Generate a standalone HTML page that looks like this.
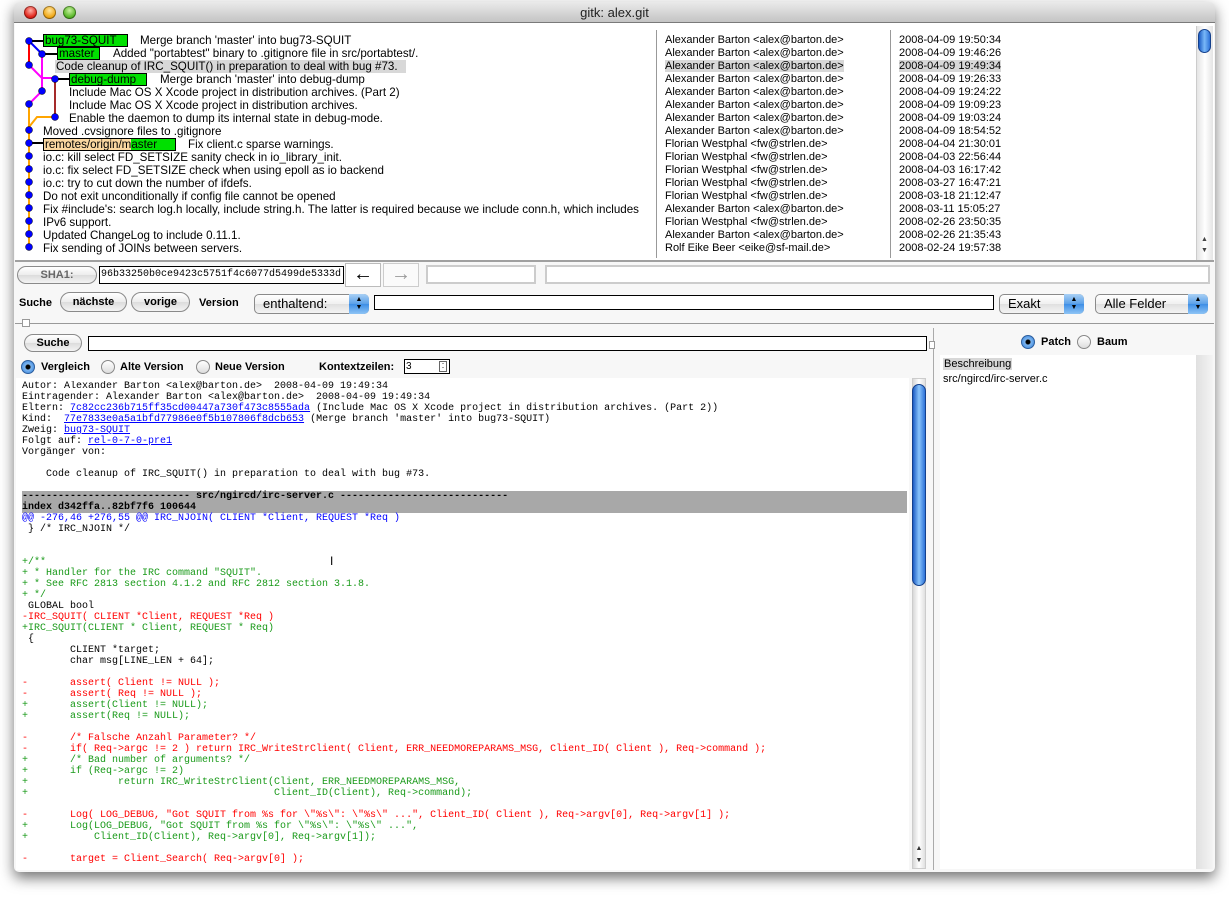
<!DOCTYPE html>
<html><head><meta charset="utf-8"><style>
*{margin:0;padding:0;box-sizing:border-box}
body{width:1229px;height:898px;background:#fff;position:relative;overflow:hidden;font-family:"Liberation Sans",sans-serif;font-size:11px;color:#000}
.a{position:absolute}
.win{left:14px;top:2px;width:1201px;height:870px;background:#f7f7f7;border-radius:5px;box-shadow:0 6px 14px rgba(0,0,0,.55);overflow:hidden}
.title{left:0;top:0;width:1201px;height:21px;background:linear-gradient(#eaeaea,#c4c4c4);border-bottom:1px solid #7a7a7a;text-align:center;font-size:13px;line-height:21px;color:#222}
.tl{width:13px;height:13px;border-radius:50%;top:4px;box-shadow:inset 0 0 0 1px rgba(0,0,0,.35)}
.row{position:absolute;height:13px;line-height:13px;white-space:nowrap;font-size:11.6px}
.lbl{position:absolute;height:13px;border:1px solid #000;background:#00e000;line-height:11px;font-size:11.6px;padding-left:1px;overflow:hidden;white-space:nowrap}
.btn{position:absolute;height:20px;border:1px solid #8a8a8a;border-radius:10px;background:linear-gradient(#fff,#ececec 50%,#dcdcdc 51%,#f4f4f4);font-weight:bold;font-size:11px;text-align:center;line-height:18px}
.inp{position:absolute;background:#fff;border:1px solid #000}
.sel{position:absolute;height:20px;border:1px solid #8a8a8a;border-radius:5px;background:linear-gradient(#fff,#f0f0f0 50%,#e0e0e0 51%,#f4f4f4);font-size:13px;line-height:18px;padding-left:8px}
.sel i{position:absolute;right:-1px;top:-1px;width:20px;height:20px;border-radius:0 5px 5px 0;background:linear-gradient(#a9d0f5,#5aa0e8 50%,#3d8ee6 51%,#8ec4f5);font-style:normal;font-size:7px;line-height:8px;text-align:center;padding-top:2px;color:#000}
.rad{position:absolute;width:14px;height:14px;border-radius:50%;border:1px solid #888;background:linear-gradient(#fff,#ddd)}
.rad.on{background:radial-gradient(circle,#000 0 2px,#7fb6ef 3px,#2f7fdb);border-color:#2c5d9c}
.b{font-weight:bold;font-size:11px}
pre{font-family:"Liberation Mono",monospace;font-size:10px;line-height:11px}
.g{color:#1a9a1a}.r{color:#f00}.bl{color:#00f}
a{color:#00f;text-decoration:underline}
</style></head><body>
<div class="a win">
 <div class="a title">gitk: alex.git</div>
 <div class="a tl" style="left:10px;background:radial-gradient(circle at 50% 35%,#ffb0a8,#e0241a 60%,#9a0d08)"></div>
 <div class="a tl" style="left:29px;background:radial-gradient(circle at 50% 35%,#ffe6a0,#f0a818 60%,#a06000)"></div>
 <div class="a tl" style="left:49px;background:radial-gradient(circle at 50% 35%,#c8f0a0,#5ab82a 60%,#2a7010)"></div>
</div>
<div class="a" style="left:15px;top:23px;width:1199px;height:239px;background:#fff;border-bottom:2px solid #a0a0a0"></div>
<div class="a" style="left:656px;top:30px;width:1px;height:228px;background:#999"></div>
<div class="a" style="left:890px;top:30px;width:1px;height:228px;background:#999"></div>
<div class="a" style="left:1196px;top:26px;width:17px;height:234px;background:linear-gradient(90deg,#e4e4e4,#fff,#e4e4e4);border-left:1px solid #ccc"></div>
<div class="a" style="left:1198px;top:29px;width:13px;height:24px;border-radius:7px;background:linear-gradient(90deg,#1c5cc4,#79b8f8,#2d72d8);border:1px solid #14408c"></div>
<div class="a" style="left:1198px;top:234px;width:13px;height:24px;font-size:7px;line-height:11px;text-align:center;color:#444">▲<br>▼</div>
<svg class="a" style="left:0;top:0" width="200" height="262">
 <g stroke-width="2" fill="none">
  <line x1="29" y1="41" x2="29" y2="65" stroke="#f00"/>
  <line x1="29" y1="41" x2="42" y2="54" stroke="#00f"/>
  <path d="M42 54 V78 L55 78 M29 65 L42 78 V91 L29 104" stroke="#f0f"/>
  <line x1="55" y1="79" x2="55" y2="117" stroke="#a52a2a"/>
  <path d="M55 117 H37 L29 127 M29 104 V250" stroke="#ffa500"/>
  <g stroke="#000"><line x1="29" y1="41" x2="44" y2="41"/><line x1="42" y1="54" x2="58" y2="54"/><line x1="55" y1="79" x2="70" y2="79"/><line x1="29" y1="143" x2="44" y2="143"/></g>
 </g>
 <g fill="#00f" stroke="#000" stroke-width=".5">
  <circle cx="29" cy="41" r="3.5"/><circle cx="42" cy="54" r="3.5"/><circle cx="29" cy="65" r="3.5"/><circle cx="55" cy="79" r="3.5"/><circle cx="42" cy="91" r="3.5"/><circle cx="29" cy="104" r="3.5"/><circle cx="55" cy="117" r="3.5"/><circle cx="29" cy="130" r="3.5"/><circle cx="29" cy="143" r="3.5"/><circle cx="29" cy="156" r="3.5"/><circle cx="29" cy="169" r="3.5"/><circle cx="29" cy="182" r="3.5"/><circle cx="29" cy="195" r="3.5"/><circle cx="29" cy="208" r="3.5"/><circle cx="29" cy="221" r="3.5"/><circle cx="29" cy="234" r="3.5"/><circle cx="29" cy="247" r="3.5"/>
 </g>
</svg>
<div class="lbl" style="left:43px;top:34px;width:85px">bug73-SQUIT</div>
<div class="row" style="left:140px;top:34px">Merge branch 'master' into bug73-SQUIT</div>
<div class="lbl" style="left:57px;top:47px;width:43px">master</div>
<div class="row" style="left:113px;top:47px">Added "portabtest" binary to .gitignore file in src/portabtest/.</div>
<div class="row" style="left:55px;top:60px;background:#d8d8d8;padding-left:1px;width:351px;overflow:hidden">Code cleanup of IRC_SQUIT() in preparation to deal with bug #73.</div>
<div class="lbl" style="left:69px;top:73px;width:78px">debug-dump</div>
<div class="row" style="left:160px;top:73px">Merge branch 'master' into debug-dump</div>
<div class="row" style="left:69px;top:86px">Include Mac OS X Xcode project in distribution archives. (Part 2)</div>
<div class="row" style="left:69px;top:99px">Include Mac OS X Xcode project in distribution archives.</div>
<div class="row" style="left:69px;top:112px">Enable the daemon to dump its internal state in debug-mode.</div>
<div class="row" style="left:43px;top:125px">Moved .cvsignore files to .gitignore</div>
<div class="lbl" style="left:43px;top:138px;width:133px;background:linear-gradient(90deg,#fad7a0 0 87px,#00e000 87px)">remotes/origin/master</div>
<div class="row" style="left:188px;top:138px">Fix client.c sparse warnings.</div>
<div class="row" style="left:43px;top:151px">io.c: kill select FD_SETSIZE sanity check in io_library_init.</div>
<div class="row" style="left:43px;top:164px">io.c: fix select FD_SETSIZE check when using epoll as io backend</div>
<div class="row" style="left:43px;top:177px">io.c: try to cut down the number of ifdefs.</div>
<div class="row" style="left:43px;top:190px">Do not exit unconditionally if config file cannot be opened</div>
<div class="row" style="left:43px;top:203px;width:610px;overflow:hidden">Fix #include's: search log.h locally, include string.h. The latter is required because we include conn.h, which includes</div>
<div class="row" style="left:43px;top:216px">IPv6 support.</div>
<div class="row" style="left:43px;top:229px">Updated ChangeLog to include 0.11.1.</div>
<div class="row" style="left:43px;top:242px">Fix sending of JOINs between servers.</div>
<div class="a" style="left:665px;top:34px;line-height:13px;white-space:pre">Alexander Barton &lt;alex@barton.de&gt;
Alexander Barton &lt;alex@barton.de&gt;
<span style="background:#d8d8d8">Alexander Barton &lt;alex@barton.de&gt;</span>
Alexander Barton &lt;alex@barton.de&gt;
Alexander Barton &lt;alex@barton.de&gt;
Alexander Barton &lt;alex@barton.de&gt;
Alexander Barton &lt;alex@barton.de&gt;
Alexander Barton &lt;alex@barton.de&gt;
Florian Westphal &lt;fw@strlen.de&gt;
Florian Westphal &lt;fw@strlen.de&gt;
Florian Westphal &lt;fw@strlen.de&gt;
Florian Westphal &lt;fw@strlen.de&gt;
Florian Westphal &lt;fw@strlen.de&gt;
Alexander Barton &lt;alex@barton.de&gt;
Florian Westphal &lt;fw@strlen.de&gt;
Alexander Barton &lt;alex@barton.de&gt;
Rolf Eike Beer &lt;eike@sf-mail.de&gt;</div>
<div class="a" style="left:899px;top:34px;line-height:13px;white-space:pre">2008-04-09 19:50:34
2008-04-09 19:46:26
<span style="background:#d8d8d8">2008-04-09 19:49:34</span>
2008-04-09 19:26:33
2008-04-09 19:24:22
2008-04-09 19:09:23
2008-04-09 19:03:24
2008-04-09 18:54:52
2008-04-04 21:30:01
2008-04-03 22:56:44
2008-04-03 16:17:42
2008-03-27 16:47:21
2008-03-18 21:12:47
2008-03-11 15:05:27
2008-02-26 23:50:35
2008-02-26 21:35:43
2008-02-24 19:57:38</div>
<div class="btn" style="left:17px;top:266px;width:80px;height:18px;line-height:16px;color:#666;font-weight:bold">SHA1:</div>
<div class="inp" style="left:99px;top:266px;width:245px;height:18px;font-family:'Liberation Mono',monospace;font-size:10px;line-height:16px;padding-left:1px;overflow:hidden">96b33250b0ce9423c5751f4c6077d5499de5333d</div>
<div class="a" style="left:345px;top:263px;width:36px;height:24px;background:#fff;border:1px solid #bbb;font-size:20px;line-height:21px;text-align:center;font-weight:bold">←</div>
<div class="a" style="left:383px;top:263px;width:36px;height:24px;background:#fafafa;border:1px solid #ccc;font-size:20px;line-height:21px;text-align:center;color:#999">→</div>
<div class="a" style="left:426px;top:265px;width:110px;height:19px;background:#fff;border:2px solid #ccc"></div>
<div class="a" style="left:545px;top:265px;width:665px;height:19px;background:#fff;border:2px solid #ccc"></div>
<div class="a b" style="left:19px;top:297px">Suche</div>
<div class="btn" style="left:60px;top:292px;width:67px">nächste</div>
<div class="btn" style="left:131px;top:292px;width:59px">vorige</div>
<div class="a b" style="left:199px;top:297px">Version</div>
<div class="sel" style="left:254px;top:294px;width:115px">enthaltend:<i>▲<br>▼</i></div>
<div class="inp" style="left:374px;top:295px;width:620px;height:15px"></div>
<div class="sel" style="left:999px;top:294px;width:85px">Exakt<i>▲<br>▼</i></div>
<div class="sel" style="left:1095px;top:294px;width:113px">Alle Felder<i>▲<br>▼</i></div>
<div class="a" style="left:15px;top:323px;width:1199px;height:1px;background:#999"></div>
<div class="a" style="left:22px;top:319px;width:8px;height:8px;border:1px solid #999;background:#fff"></div>
<div class="btn" style="left:24px;top:334px;width:58px;height:18px;line-height:16px">Suche</div>
<div class="inp" style="left:88px;top:336px;width:839px;height:15px"></div>
<div class="a" style="left:933px;top:328px;width:1px;height:542px;background:#aaa"></div>
<div class="a" style="left:929px;top:341px;width:6px;height:8px;border:1px solid #999;background:#fff"></div>
<div class="rad on" style="left:21px;top:360px"></div><div class="a b" style="left:41px;top:361px">Vergleich</div>
<div class="rad" style="left:101px;top:360px"></div><div class="a b" style="left:120px;top:361px">Alte Version</div>
<div class="rad" style="left:196px;top:360px"></div><div class="a b" style="left:215px;top:361px">Neue Version</div>
<div class="a b" style="left:319px;top:361px">Kontextzeilen:</div>
<div class="inp" style="left:404px;top:359px;width:46px;height:15px;font-size:10px;line-height:13px;padding-left:1px">3<span style="position:absolute;right:2px;top:1px;width:8px;height:11px;border:1px solid #666;font-size:6px;line-height:4px;text-align:center">-<br>-</span></div>
<div class="rad on" style="left:1021px;top:335px"></div><div class="a b" style="left:1041px;top:336px">Patch</div>
<div class="rad" style="left:1077px;top:335px"></div><div class="a b" style="left:1097px;top:336px">Baum</div>
<div class="a" style="left:940px;top:355px;width:256px;height:514px;background:#fff"></div>
<div class="a" style="left:1196px;top:355px;width:17px;height:514px;background:linear-gradient(90deg,#e0e0e0,#f4f4f4)"></div>
<div class="a" style="left:943px;top:357px;line-height:15px"><span style="background:#d8d8d8;padding:0 1px">Beschreibung</span><br>src/ngircd/irc-server.c</div>
<div class="a" style="left:16px;top:378px;width:893px;height:492px;background:#fff"></div>
<div class="a" style="left:912px;top:378px;width:14px;height:491px;background:linear-gradient(90deg,#d8d8d8,#fff,#e0e0e0);border:1px solid #ccc"></div>
<div class="a" style="left:912px;top:384px;width:14px;height:202px;border-radius:7px;background:linear-gradient(90deg,#1c5cc4,#8ac4fb,#2d72d8);border:1px solid #14408c"></div>
<div class="a" style="left:913px;top:843px;width:12px;height:25px;font-size:7px;line-height:12px;text-align:center;color:#333">▲<br>▼</div>
<div class="a" style="left:22px;top:491px;width:885px;height:22px;background:#a8a8a8"></div>
<pre class="a" style="left:22px;top:381px;width:886px;height:489px;overflow:hidden">Autor: Alexander Barton &lt;alex@barton.de&gt;  2008-04-09 19:49:34
Eintragender: Alexander Barton &lt;alex@barton.de&gt;  2008-04-09 19:49:34
Eltern: <a>7c82cc236b715ff35cd00447a730f473c8555ada</a> (Include Mac OS X Xcode project in distribution archives. (Part 2))
Kind:  <a>77e7833e0a5a1bfd77986e0f5b107806f8dcb653</a> (Merge branch 'master' into bug73-SQUIT)
Zweig: <a>bug73-SQUIT</a>
Folgt auf: <a>rel-0-7-0-pre1</a>
Vorgänger von:

    Code cleanup of IRC_SQUIT() in preparation to deal with bug #73.

<b>---------------------------- src/ngircd/irc-server.c ----------------------------</b>
<b>index d342ffa..82bf7f6 100644</b>
<span class="bl">@@ -276,46 +276,55 @@ IRC_NJOIN( CLIENT *Client, REQUEST *Req )</span>
 } /* IRC_NJOIN */


<span class="g">+/**
+ * Handler for the IRC command "SQUIT".
+ * See RFC 2813 section 4.1.2 and RFC 2812 section 3.1.8.
+ */</span>
 GLOBAL bool
<span class="r">-IRC_SQUIT( CLIENT *Client, REQUEST *Req )</span>
<span class="g">+IRC_SQUIT(CLIENT * Client, REQUEST * Req)</span>
 {
        CLIENT *target;
        char msg[LINE_LEN + 64];

<span class="r">-       assert( Client != NULL );
-       assert( Req != NULL );</span>
<span class="g">+       assert(Client != NULL);
+       assert(Req != NULL);</span>

<span class="r">-       /* Falsche Anzahl Parameter? */
-       if( Req-&gt;argc != 2 ) return IRC_WriteStrClient( Client, ERR_NEEDMOREPARAMS_MSG, Client_ID( Client ), Req-&gt;command );</span>
<span class="g">+       /* Bad number of arguments? */
+       if (Req-&gt;argc != 2)
+               return IRC_WriteStrClient(Client, ERR_NEEDMOREPARAMS_MSG,
+                                         Client_ID(Client), Req-&gt;command);</span>

<span class="r">-       Log( LOG_DEBUG, "Got SQUIT from %s for \"%s\": \"%s\" ...", Client_ID( Client ), Req-&gt;argv[0], Req-&gt;argv[1] );</span>
<span class="g">+       Log(LOG_DEBUG, "Got SQUIT from %s for \"%s\": \"%s\" ...",
+           Client_ID(Client), Req-&gt;argv[0], Req-&gt;argv[1]);</span>

<span class="r">-       target = Client_Search( Req-&gt;argv[0] );</span>
</pre>
<div class="a" style="left:330px;top:554px;font-size:12px">I</div>
</body></html>
